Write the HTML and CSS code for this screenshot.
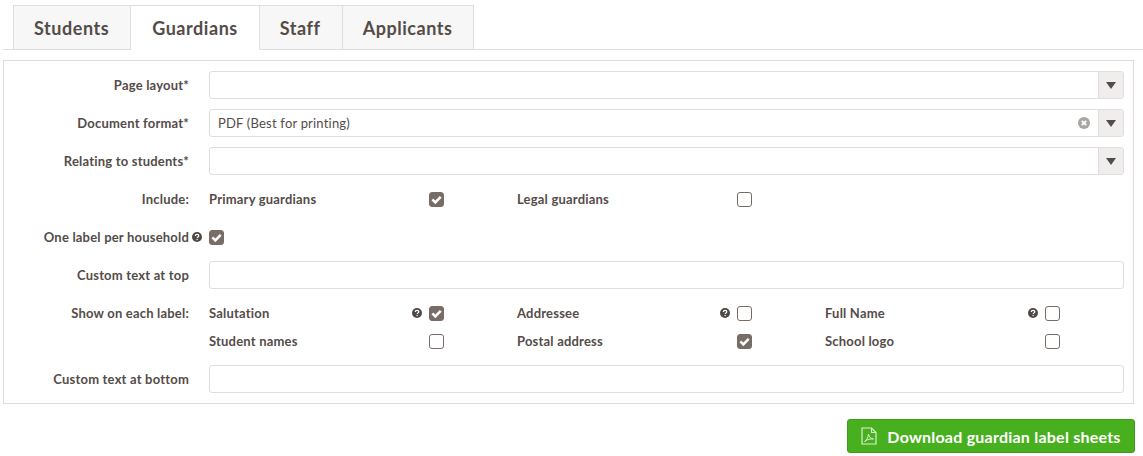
FILE: index.html
```html
<!DOCTYPE html>
<html lang="en">
<head>
<meta charset="utf-8">
<title>Label sheets</title>
<link rel="stylesheet" href="styles.css">
</head>
<body>
<svg class="defs" width="0" height="0" aria-hidden="true">
  <symbol id="tick" viewBox="0 0 15 15"><path d="M3.4 7.400l2.900 2.900 5.400-5.500" fill="none" stroke="#fff" stroke-width="2.600"/></symbol>
  <symbol id="help" viewBox="0 0 10 10"><circle cx="5" cy="5" r="5" fill="#4f4845"/><path d="M3.300 3.900c0-1 .8-1.600 1.800-1.600s1.700.6 1.700 1.500c0 1.300-1.600 1.200-1.600 2.300" fill="none" stroke="#fff" stroke-width="1.200"/><rect x="4.500" y="6.900" width="1.200" height="1.200" fill="#fff"/></symbol>
</svg>
<nav class="tabs">
  <a class="tab">Students</a>
  <a class="tab active">Guardians</a>
  <a class="tab">Staff</a>
  <a class="tab">Applicants</a>
</nav>
<form class="panel">
  <div class="row">
    <label class="label">Page layout*</label>
    <div class="select"><span class="value"></span><span class="arrow"></span></div>
  </div>
  <div class="row">
    <label class="label">Document format*</label>
    <div class="select"><span class="value">PDF (Best for printing)</span>
      <svg class="clear" viewBox="0 0 12 12"><circle cx="6" cy="6" r="6" fill="#a9a5a3"/><path d="M3.800 3.800l4.400 4.400M8.200 3.800l-4.400 4.400" stroke="#fff" stroke-width="1.800"/></svg>
      <span class="arrow"></span></div>
  </div>
  <div class="row">
    <label class="label">Relating to students*</label>
    <div class="select"><span class="value"></span><span class="arrow"></span></div>
  </div>
  <div class="row">
    <label class="label">Include:</label>
    <div class="cols">
      <div class="opt"><span class="name">Primary guardians</span><span class="check on"><svg><use href="#tick"/></svg></span></div>
      <div class="opt"><span class="name">Legal guardians</span><span class="check"></span></div>
    </div>
  </div>
  <div class="row">
    <label class="label">One label per household<svg class="help inline"><use href="#help"/></svg></label>
    <span class="check on"><svg><use href="#tick"/></svg></span>
  </div>
  <div class="row">
    <label class="label">Custom text at top</label>
    <div class="input"></div>
  </div>
  <div class="group">
    <div class="row">
      <label class="label">Show on each label:</label>
      <div class="cols">
        <div class="opt"><span class="name">Salutation</span><svg class="help"><use href="#help"/></svg><span class="check on"><svg><use href="#tick"/></svg></span></div>
        <div class="opt"><span class="name">Addressee</span><svg class="help"><use href="#help"/></svg><span class="check"></span></div>
        <div class="opt"><span class="name">Full Name</span><svg class="help"><use href="#help"/></svg><span class="check"></span></div>
      </div>
    </div>
    <div class="row">
      <span class="label"></span>
      <div class="cols">
        <div class="opt"><span class="name">Student names</span><span class="check"></span></div>
        <div class="opt"><span class="name">Postal address</span><span class="check on"><svg><use href="#tick"/></svg></span></div>
        <div class="opt"><span class="name">School logo</span><span class="check"></span></div>
      </div>
    </div>
  </div>
  <div class="row">
    <label class="label">Custom text at bottom</label>
    <div class="input"></div>
  </div>
</form>
<div class="actions">
  <button class="download" type="button">
    <svg class="pdf" viewBox="0 0 16 18"><path d="M1 1h9.500L15 5.500V17H1zM10.500 1v4.500H15" fill="none" stroke="#d9f0cf" stroke-width="1.200"/><path d="M3.500 14.500c2.500-1.500 3.500-4 4-7.500.5 3 2 4.500 5 5-3-.5-6.500.5-9 2.500z" fill="none" stroke="#d9f0cf" stroke-width="1"/></svg>
    Download guardian label sheets
  </button>
</div>
</body>
</html>
```
FILE: styles.css
```css
* { box-sizing: border-box; }
html, body { margin: 0; padding: 0; }
body {
  width: 1143px;
  height: 456px;
  overflow: hidden;
  background: #fff;
  color: #544c49;
  font-family: "Lato", "Noto Sans", sans-serif;
  font-size: 13px;
  letter-spacing: 0.2px;
}
.defs { position: absolute; }
.tabs {
  display: flex;
  height: 50px;
  margin-left: 3px;
  padding: 5px 0 0 10px;
  border-bottom: 1px solid #e0dddc;
}
.tab {
  height: 45px;
  padding: 11px 21px 0 20px;
  background: #f7f7f7;
  border: 1px solid #e0dddc;
  border-left-width: 0;
  font-size: 18px;
  font-weight: 700;
  line-height: 22px;
  letter-spacing: 0.55px;
}
.tab:first-child { border-left-width: 1px; }
.tab:last-child { padding-right: 20px; }
.tab.active { padding-left: 21px; background: #fff; border-bottom-color: #fff; }
.panel {
  display: flex;
  flex-direction: column;
  gap: 10px;
  width: 1131px;
  height: 344px;
  margin: 10px 0 0 3px;
  padding: 10px 9px 0 0;
  border: 1px solid #e0dddc;
}
.row { display: flex; align-items: center; height: 28px; }
.group { display: flex; flex-direction: column; }
.label {
  display: flex;
  align-items: center;
  justify-content: flex-end;
  flex: none;
  width: 185px;
  margin-right: 20px;
  font-weight: 700;
  white-space: nowrap;
}
.select, .input {
  display: flex;
  align-items: center;
  flex: 1;
  height: 28px;
  border: 1px solid #e0dddc;
  border-radius: 3px;
}
.value { flex: 1; padding-left: 8px; }
.clear { width: 12px; height: 12px; margin-right: 8px; }
.arrow {
  position: relative;
  flex: none;
  width: 25px;
  height: 26px;
  background: #f0eeed;
  border-left: 1px solid #e0dddc;
}
.arrow::after {
  content: "";
  position: absolute;
  left: 7px;
  top: 10px;
  border-style: solid;
  border-width: 7px 5px 0;
  border-color: #544c49 transparent transparent;
}
.cols { display: flex; gap: 73px; }
.opt { display: flex; align-items: center; width: 235px; }
.name { flex: 1; font-weight: 700; }
.check {
  display: block;
  flex: none;
  width: 15px;
  height: 15px;
  background: #fff;
  border: 1px solid #786c67;
  border-radius: 3px;
}
.check.on { background: #786c67; }
.check svg { display: block; width: 15px; height: 15px; margin: -1px; }
.help { flex: none; width: 10px; height: 10px; margin-right: 7px; }
.help.inline { margin: 0 -13px 0 3px; }
.actions { display: flex; justify-content: flex-end; padding: 15px 8px 0 0; }
.download {
  display: flex;
  align-items: center;
  justify-content: center;
  width: 288px;
  height: 34px;
  padding: 0;
  background: #48b01e;
  border: 1px solid #3f9b1a;
  border-radius: 3px;
  color: #fff;
  font-family: inherit;
  font-size: 16px;
  font-weight: 700;
  letter-spacing: 0.23px;
}
.pdf { width: 16px; height: 18px; margin-right: 10px; }
```
